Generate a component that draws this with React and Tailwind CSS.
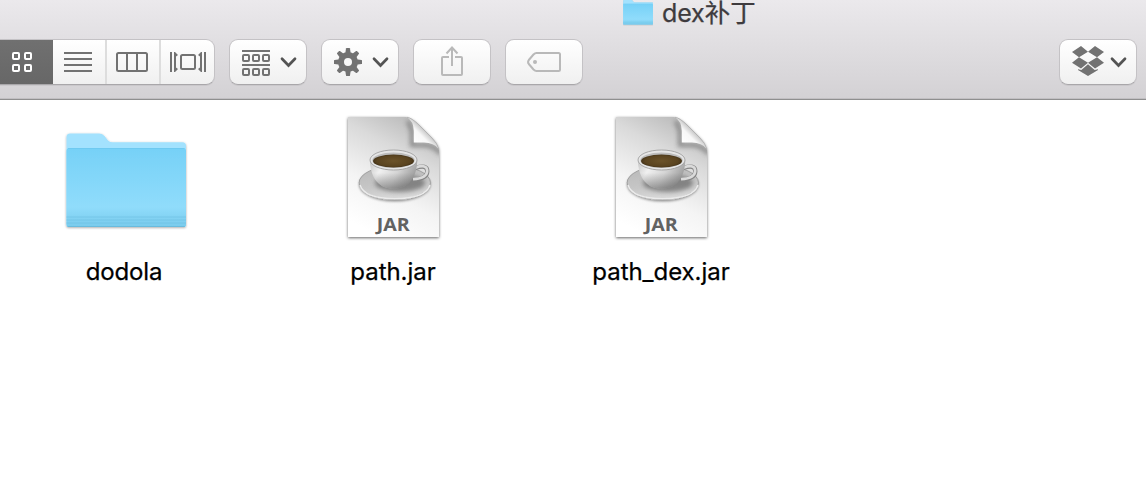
import React from "react";

function FolderArt({ className, viewBox }) {
  return (
    <svg className={className} viewBox={viewBox} preserveAspectRatio="none">
      <defs>
        <linearGradient id="folderFront" x1="0" y1="0" x2="0" y2="1">
          <stop offset="0" stopColor="#76d1f7" />
          <stop offset="0.75" stopColor="#90dcfb" />
          <stop offset="0.85" stopColor="#86d5f5" />
          <stop offset="1" stopColor="#79cbec" />
        </linearGradient>
        <filter id="folderShadow" x="-10%" y="-10%" width="120%" height="120%">
          <feDropShadow dx="0" dy="0.8" stdDeviation="1.1" floodColor="#000" floodOpacity="0.35" />
        </filter>
      </defs>
      <g filter="url(#folderShadow)">
        <path d="M66.500 137Q66.500 133.500 70 133.500H99.500Q102.500 133.500 104.500 136L108 140.500Q109.500 142.300 112 142.300H182.500Q186 142.300 186 146V224.500Q186 227 183.500 227H69Q66.500 227 66.500 224.500Z" fill="#a3e2fe" />
        <path d="M66.500 151Q66.500 148 69.500 148H183Q186 148 186 151V224.500Q186 227 183.500 227H69Q66.500 227 66.500 224.500Z" fill="url(#folderFront)" />
      </g>
      <path d="M68 148.500H184.500" stroke="#6cc8ef" strokeWidth="0.8" />
      <path d="M66.500 217H186M66.500 220H186M66.500 223H186" stroke="#68bade" strokeWidth="0.9" opacity="0.6" />
      <path d="M67.500 226.500H185" stroke="#5fb1d4" strokeWidth="1" opacity="0.6" />
    </svg>
  );
}

function JarArt() {
  return (
    <svg className="block h-[140px] w-[140px]" viewBox="323 110 140 140">
      <defs>
        <linearGradient id="paper" x1="0.75" y1="0" x2="0.35" y2="1">
          <stop offset="0" stopColor="#b8b8b8" />
          <stop offset="0.3" stopColor="#dadada" />
          <stop offset="0.65" stopColor="#f4f4f4" />
          <stop offset="1" stopColor="#ffffff" />
        </linearGradient>
        <linearGradient id="curl" gradientUnits="userSpaceOnUse" x1="412" y1="143" x2="425" y2="130">
          <stop offset="0" stopColor="#ffffff" />
          <stop offset="0.65" stopColor="#f7f7f7" />
          <stop offset="1" stopColor="#c4c4c4" />
        </linearGradient>
        <linearGradient id="saucer" x1="0" y1="0" x2="0.2" y2="1">
          <stop offset="0" stopColor="#b8b8b8" />
          <stop offset="0.65" stopColor="#c6c6c6" />
          <stop offset="1" stopColor="#d8d8d8" />
        </linearGradient>
        <linearGradient id="cup" x1="0" y1="0" x2="1" y2="0.35">
          <stop offset="0" stopColor="#c4c4c4" />
          <stop offset="0.3" stopColor="#f0f0f0" />
          <stop offset="0.65" stopColor="#d4d4d4" />
          <stop offset="1" stopColor="#a0a0a0" />
        </linearGradient>
        <linearGradient id="cupBase" x1="0" y1="0" x2="0" y2="1">
          <stop offset="0.45" stopColor="#555" stopOpacity="0" />
          <stop offset="1" stopColor="#555" stopOpacity="0.5" />
        </linearGradient>
        <radialGradient id="coffee">
          <stop offset="0" stopColor="#6b532a" />
          <stop offset="0.8" stopColor="#5a4420" />
          <stop offset="1" stopColor="#46351a" />
        </radialGradient>
        <filter id="paperShadow" x="-10%" y="-10%" width="120%" height="120%">
          <feDropShadow dx="0" dy="1" stdDeviation="1.6" floodColor="#000" floodOpacity="0.6" />
        </filter>
        <filter id="dishShadow" x="-20%" y="-20%" width="140%" height="150%">
          <feDropShadow dx="0" dy="1.5" stdDeviation="1.3" floodColor="#000" floodOpacity="0.4" />
        </filter>
        <filter id="soft" x="-40%" y="-40%" width="180%" height="180%">
          <feGaussianBlur stdDeviation="2.2" />
        </filter>
        <clipPath id="sheet">
          <path d="M348 117H406Q412 118 419 125L432 138Q438 144 439 150V237H348Z" />
        </clipPath>
      </defs>
      <path d="M348 117H406Q412 118 419 125L432 138Q438 144 439 150V237H348Z" fill="url(#paper)" filter="url(#paperShadow)" />
      <g clipPath="url(#sheet)">
        <path d="M408 121L412 131V145H425Q435 146 441 154" fill="none" stroke="#6f6f6f" strokeWidth="4.500" opacity="0.65" filter="url(#soft)" />
      </g>
      <path d="M407 117.300Q413.500 121 413.800 131V142.500H424Q434 142.500 438.800 149Q437.500 143.500 432 138L419 125Q412 118 407 117.300Z" fill="url(#curl)" />
      <path d="M407 117.300Q412 118 419 125L432 138Q437.500 143.500 438.800 149" fill="none" stroke="#acacac" strokeWidth="0.8" />
      <ellipse cx="394.800" cy="183" rx="36" ry="17" fill="url(#saucer)" filter="url(#dishShadow)" />
      <ellipse cx="394.800" cy="182.800" rx="35.700" ry="16.700" fill="none" stroke="#959595" strokeWidth="0.8" />
      <path d="M360 185Q364 198.300 394.800 198.800Q426 198.300 430 185" fill="none" stroke="#ebebeb" strokeWidth="1.500" />
      <ellipse cx="400" cy="183" rx="25" ry="9" fill="#606060" opacity="0.65" filter="url(#soft)" />
      <path d="M415.500 168Q427.300 164 427.300 171.500Q427 179 412.500 180" fill="none" stroke="#858585" strokeWidth="4.300" />
      <path d="M415.500 167.600Q427.200 163.600 427.200 171Q427 178.300 413 179.200" fill="none" stroke="#dadada" strokeWidth="2.700" />
      <path d="M370 160C370 174 376 188.700 393.500 188.700C411 188.700 417.200 174 417.200 160Z" fill="url(#cup)" />
      <path d="M370 160C370 174 376 188.700 393.500 188.700C411 188.700 417.200 174 417.200 160Z" fill="url(#cupBase)" />
      <ellipse cx="393.500" cy="160" rx="23.500" ry="10" fill="#e6e6e6" stroke="#999" strokeWidth="0.800" />
      <ellipse cx="393.500" cy="160.300" rx="21.200" ry="7.800" fill="#bdbdbd" />
      <ellipse cx="393.500" cy="161" rx="20.500" ry="6.500" fill="url(#coffee)" />
      <text x="393.300" y="230.500" textAnchor="middle" fontFamily="'Open Sans', 'Noto Sans', sans-serif" fontWeight="700" fontSize="18.500" textLength="33" lengthAdjust="spacingAndGlyphs" fill="#626262">
        JAR
      </text>
    </svg>
  );
}

function ToolButton({ children, viewBox, muted }) {
  return (
    <button
      className={
        "block h-[46px] w-[78px] shrink-0 overflow-hidden rounded-[9px] border border-[#c4c2c5] border-b-[#a9a7aa] bg-linear-to-b from-white to-[#f0f0f0] shadow-[0_1px_0_#cac8cb] " +
        (muted ? "text-[#b9b9b9]" : "text-[#727272]")
      }
    >
      <svg className="-ml-px -mt-px block h-[46px] w-[78px]" viewBox={viewBox} fill="none" stroke="currentColor" strokeWidth="2">
        {children}
      </svg>
    </button>
  );
}

function Chevron({ x }) {
  return <path d={`M${x} 58.800l6.500 6.700 6.500-6.700`} stroke="#545454" strokeWidth="2.700" strokeLinecap="round" />;
}

const GRID = [[13, 53], [25, 53], [13, 65], [25, 65]];
const GROUPS = [[243, 55], [253, 55], [263, 55], [243, 69], [253, 69], [263, 69]];
const TEETH = [0, 45, 90, 135, 180, 225, 270, 315];

function ViewSwitcher() {
  return (
    <div className="flex h-[46px] w-[215px] shrink-0 overflow-hidden rounded-r-[9px] border border-l-0 border-[#c4c2c5] border-b-[#a9a7aa] bg-linear-to-b from-white to-[#f0f0f0] text-[#727272] shadow-[0_1px_0_#cac8cb]">
      <button className="-mt-px h-[46px] w-[53px] shrink-0 border-y border-[#5b5b5b] bg-linear-to-b from-[#707070] to-[#676767]">
        <svg className="-mt-px block h-[46px] w-[53px]" viewBox="0 39 53 46" fill="none" stroke="white" strokeWidth="2">
          {GRID.map(([x, y]) => <rect key={`${x}-${y}`} x={x} y={y} width="6" height="6" rx="1" />)}
        </svg>
      </button>
      <button className="w-[54px] shrink-0 border-r-2 border-[#dddddd]">
        <svg className="-mt-px block h-[46px] w-[52px]" viewBox="53 39 52 46" stroke="currentColor" strokeWidth="2">
          <path d="M64 53h28M64 59h28M64 65h28M64 71h28" />
        </svg>
      </button>
      <button className="w-[54px] shrink-0 border-r-2 border-[#dddddd]">
        <svg className="-mt-px block h-[46px] w-[52px]" viewBox="107 39 52 46" fill="none" stroke="currentColor" strokeWidth="2">
          <rect x="117" y="53" width="30" height="18" rx="1.500" />
          <path d="M127 53v18M137 53v18" />
        </svg>
      </button>
      <button className="w-[53px] shrink-0">
        <svg className="-mt-px block h-[46px] w-[53px]" viewBox="161 39 53 46" fill="none" stroke="currentColor" strokeWidth="2">
          <path d="M171 52v20M205 52v20" />
          <path d="M174 52h1l3 3-2 1.500v11l2 1.500-3 3h-1zM202 52h-1l-3 3 2 1.500v11l-2 1.500 3 3h1z" fill="currentColor" stroke="none" />
          <rect x="181" y="55" width="14" height="14" rx="1.500" />
        </svg>
      </button>
    </div>
  );
}

function Item({ label, labelClass, children }) {
  return (
    <div className="flex w-[140px] shrink-0 flex-col items-center">
      {children}
      <div className={`mt-[6px] whitespace-nowrap text-[24px] leading-[32px] text-black [-webkit-text-stroke:0.25px_black] ${labelClass}`}>{label}</div>
    </div>
  );
}

export default function App() {
  return (
    <div className="h-[494px] w-[1146px] overflow-hidden bg-white font-['Inter','Noto_Sans_CJK_SC',sans-serif]">
      <header className="flex h-[100px] flex-col border-b border-[#8f8f8f] bg-linear-to-b from-[#ebe9ec] to-[#d3d1d4] shadow-[inset_0_-1px_0_#c1bfc2]">
        <div className="flex h-[39px] shrink-0 items-start pl-[620px]">
          <FolderArt className="-mt-px block h-[28px] w-[36px] shrink-0" viewBox="54 130 144 107" />
          <h1 className="ml-[6px] flex whitespace-nowrap font-normal leading-[26px] text-[#3e3b3e] [-webkit-text-stroke:0.25px_#3e3b3e]">
            <span className="text-[25px] tracking-[-0.1px]">dex</span>
            <span className="text-[25.5px]">补丁</span>
          </h1>
        </div>
        <div className="flex h-[46px] shrink-0 items-start pr-[9px]">
          <ViewSwitcher />
          <div className="ml-[14px] flex gap-[14px]">
            <ToolButton viewBox="229 39 78 46">
              <path d="M242 51h28M242 65h28" />
              {GROUPS.map(([x, y]) => <rect key={`${x}-${y}`} x={x} y={y} width="6" height="6" rx="1" />)}
              <Chevron x={282} />
            </ToolButton>
            <ToolButton viewBox="321 39 78 46">
              <circle cx="348" cy="62" r="7" strokeWidth="6" />
              <g fill="currentColor" stroke="none">
                {TEETH.map((a) => <path key={a} d="M345.200 54L346 48.500Q346.100 48 346.600 48H349.400Q349.900 48 350 48.500L350.800 54Z" transform={`rotate(${a} 348 62)`} />)}
              </g>
              <Chevron x={374} />
            </ToolButton>
            <ToolButton viewBox="413 39 78 46" muted>
              <path d="M449 57h-6q-1 0-1 1v16q0 1 1 1h18q1 0 1-1V58q0-1-1-1h-6M452 66V48M446.500 53.500L452 47.500L457.500 53.500" />
            </ToolButton>
            <ToolButton viewBox="505 39 78 46" muted>
              <path d="M536.500 53H558.500Q560 53 560 54.500V69.500Q560 71 558.500 71H536.500Q535 71 533.500 69.500L528.800 64Q527.300 62 528.800 60L533.500 54.500Q535 53 536.500 53Z" />
              <circle cx="535" cy="62" r="2" fill="currentColor" stroke="none" />
            </ToolButton>
          </div>
          <div className="ml-auto">
            <ToolButton viewBox="1059 39 78 46">
              <g fill="currentColor" stroke="none">
                <path d="M1072 52L1081 46L1088 51.700L1079 57.300ZM1104 52L1095 46L1088 51.700L1097 57.300Z" />
                <path d="M1072 62.700L1079 57.300L1088 62.800L1081 68.500ZM1104 62.700L1097 57.300L1088 62.800L1095 68.500Z" />
                <path d="M1078 69.200L1081.300 69.900L1088 64.200L1094.700 69.900L1098 69.200V70L1088 76L1078 70Z" />
              </g>
              <Chevron x={1112} />
            </ToolButton>
          </div>
        </div>
      </header>
      <main className="flex gap-[128px] pl-[55px] pt-[10px]">
        <Item label="dodola" labelClass="mr-[2px] tracking-[-0.15px]">
          <FolderArt className="block h-[140px] w-[140px]" viewBox="55 110 140 140" />
        </Item>
        <Item label="path.jar" labelClass="tracking-[-0.05px]">
          <JarArt />
        </Item>
        <Item label="path_dex.jar" labelClass="tracking-[-0.05px]">
          <JarArt />
        </Item>
      </main>
    </div>
  );
}
